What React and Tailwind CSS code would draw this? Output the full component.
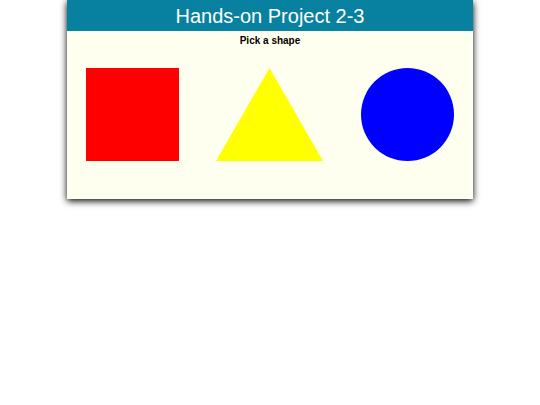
export default function App() {
  return (
    <div className="min-h-screen bg-white font-['Liberation_Sans',Arial,sans-serif]">
      <div className="mx-auto w-[406px] h-[199px] bg-[#fffff0] shadow-[0_2px_7px_#000]">
        <header className="h-[31px] bg-[#07819f] flex items-center justify-center">
          <h1 className="text-white text-[20px] leading-none">Hands-on Project 2-3</h1>
        </header>
        <p className="text-center font-bold text-[10px] leading-[12px] mt-[4px] text-black">
          Pick a shape
        </p>
        <div className="flex justify-around items-start mt-[21px]">
          <div className="w-[93px] h-[93px] bg-[#ff0000]" />
          <svg width="107" height="93" viewBox="0 0 107 93">
            <polygon points="53.5,0 107,93 0,93" fill="#ffff00" />
          </svg>
          <div className="w-[93px] h-[93px] rounded-full bg-[#0000ff]" />
        </div>
      </div>
    </div>
  );
}
